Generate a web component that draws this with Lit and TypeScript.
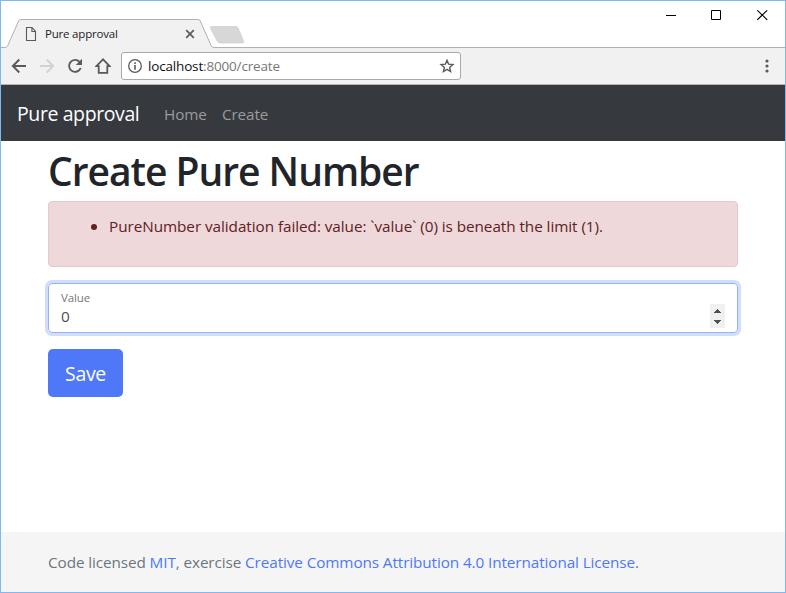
import { LitElement, html, css } from "lit";
import { customElement } from "lit/decorators.js";

@customElement("browser-chrome")
class BrowserChrome extends LitElement {
  static styles = css`
    :host { display: block; flex: none; }
    * { box-sizing: border-box; }
    svg { display: block; flex: none; }
    .titlebar { height: 47px; display: grid; grid-template-columns: 1fr auto; position: relative; }
    .shapes { position: absolute; left: 0; top: 0; }
    .tab { position: relative; display: flex; align-items: center; height: 28px; margin: 19px 0 0 24px; width: 171px; font-size: 11.5px; color: #222; }
    .tab span { margin-left: 8px; flex: 1; letter-spacing: -0.2px; }
    .controls { display: flex; padding: 8px 16px 0 0; gap: 34px; }
    .controls svg { width: 12px; }
    .toolbar { height: 37px; background: #f1f1f1; border-bottom: 1px solid #b6b4b6; display: flex; align-items: center; padding-left: 10px; }
    .nav { display: flex; gap: 12px; margin-right: 10px; }
    .address { width: 340px; height: 28px; border: 1px solid #a9a9a9; border-radius: 3px; background: #fff; display: flex; align-items: center; padding: 0 5px; font-size: 13.5px; letter-spacing: -0.17px; color: #777; }
    .address span { flex: 1; margin-left: 5px; }
    .address b { font-weight: 400; color: #111; }
    .menu { margin-left: auto; margin-right: 16px; }
  `;
  render() {
    return html`
      <div class="titlebar">
        <svg class="shapes" width="784" height="47" viewBox="1 1 784 47">
          <path d="M1 47.5H7L19.5 19.5H199.5L212 47.5H785V48H1Z" fill="#f1f1f1"/>
          <path d="M1 47.5H5Q7 47.5 7.8 45.5L18.6 21Q19.3 19.5 21 19.5H198Q199.6 19.5 200.3 21L211 45.5Q212 47.5 214 47.5H785" fill="none" stroke="#b2b0b2"/>
          <path d="M211.6 26.5H236Q237.5 26.5 238.2 28L243.7 41.5Q244 43 242.5 43H220Q218 43 217.2 41.2L210.5 28.2Q210 26.5 211.6 26.5Z" fill="#d7d7d7" stroke="#cdcdcd" stroke-width=".7"/>
        </svg>
        <div class="tab">
          <svg width="12" height="16" viewBox="0 0 12 16" fill="none" stroke="#5a5a5a" stroke-width="1.1"><path d="M1.5 1.5H7L10.5 5.2V14.5H1.5ZM6.9 1.6V5.5H10.5"/></svg>
          <span>Pure approval</span>
          <svg width="12" height="12" viewBox="0 0 12 12" stroke="#5a5a5a" stroke-width="1.7"><path d="M2.2 2.2L9.8 9.8M9.8 2.2L2.2 9.8"/></svg>
        </div>
        <div class="controls">
          <svg width="12" height="12" viewBox="0 0 12 12"><path d="M1 6H11V7H1Z" fill="#000"/></svg>
          <svg width="12" height="12" viewBox="0 0 12 12"><path d="M.5 1.5H9.5V10.5H.5Z" fill="none" stroke="#000"/></svg>
          <svg width="12" height="12" viewBox="0 0 12 12"><path d="M.3 1.3L10.2 10.8M10.2 1.3L.3 10.8" stroke="#000" stroke-width="1.15"/></svg>
        </div>
      </div>
      <div class="toolbar">
        <div class="nav">
          <svg width="16" height="16" viewBox="0 0 16 16" fill="none" stroke="#5a5a5a" stroke-width="1.9"><path d="M15 8H2.5M8.3 1.5L1.8 8L8.3 14.5"/></svg>
          <svg width="16" height="16" viewBox="0 0 16 16" fill="none" stroke="#d2d2d2" stroke-width="1.9"><path d="M1 8H13.5M7.7 1.5L14.2 8L7.7 14.5"/></svg>
          <svg width="16" height="16" viewBox="0 0 16 16"><path d="M12.6 3.9A6 6 0 1 0 13.7 10" fill="none" stroke="#5a5a5a" stroke-width="1.9"/><path d="M15 .8V7H8.8Z" fill="#5a5a5a"/></svg>
          <svg width="16" height="16" viewBox="0 0 16 16" fill="none" stroke="#5a5a5a" stroke-width="1.8"><path d="M8 1.4L1.4 8.1H3.7V14.9H12.3V8.1H14.6Z"/></svg>
        </div>
        <div class="address">
          <svg width="16" height="16" viewBox="0 0 16 16"><circle cx="8" cy="8" r="6.3" fill="none" stroke="#5a5a5a" stroke-width="1.3"/><path d="M7.2 4.3H8.8V6H7.2ZM7.2 7H8.8V11.7H7.2Z" fill="#5a5a5a"/></svg>
          <span><b>localhost</b>:8000/create</span>
          <svg width="16" height="16" viewBox="0 0 16 16"><path d="M8 2.3L9.6 6.2L13.9 6.6L10.6 9.4L11.6 13.6L8 11.4L4.4 13.6L5.4 9.4L2.1 6.6L6.4 6.2Z" fill="none" stroke="#5a5a5a" stroke-width="1.4"/></svg>
        </div>
        <svg class="menu" width="4" height="14" viewBox="0 0 4 14" fill="#5a5a5a"><circle cx="2" cy="2" r="1.6"/><circle cx="2" cy="7" r="1.6"/><circle cx="2" cy="12" r="1.6"/></svg>
      </div>`;
  }
}

@customElement("app-root")
class AppRoot extends LitElement {
  static styles = css`
    :host { display: flex; flex-direction: column; box-sizing: border-box; width: 786px; height: 593px; border: 1px solid #7eb8f5; background: #fff; font-family: "Open Sans", "Noto Sans", sans-serif; font-size: 15.3px; line-height: 24px; color: #212529; }
    * { box-sizing: border-box; }
    .navbar { flex: none; height: 56px; background: #36393e; display: flex; align-items: center; padding: 1px 0 0 16px; color: #9a9c9e; letter-spacing: -0.15px; }
    .brand { width: 147px; color: #fff; font-size: 19.5px; letter-spacing: -0.4px; }
    .home { width: 58px; }
    main { flex: 1; padding: 0 47px; }
    h1 { margin: 9px 0 9px; font-size: 39px; font-weight: 600; line-height: 42px; white-space: nowrap; letter-spacing: -1.02px; }
    .alert { height: 66px; border: 1px solid #e9c8cc; border-radius: 4px; background: #eed8da; color: #602024; padding: 12px 20px; }
    ul { margin: 0; padding: 0 0 0 40px; list-style: none; white-space: nowrap; letter-spacing: -0.06px; }
    li { display: flex; align-items: center; }
    li::before { content: ""; flex: none; width: 6px; height: 6px; border-radius: 50%; background: #602024; margin: 1px 12px 0 -18px; }
    .field { margin-top: 16px; height: 50px; border: 1px solid #8fb4f8; border-radius: 4px; box-shadow: 0 0 0 3px #d2dcfb; padding: 5px 12px 4px; display: grid; grid-template-columns: 1fr auto; color: #495057; }
    .label { font-size: 11.5px; line-height: 17px; color: #777; letter-spacing: -0.1px; }
    .value { line-height: 21px; }
    .spin { align-self: end; width: 15px; height: 24px; background: #f0f0f0; display: block; }
    .save { margin-top: 16px; width: 75px; height: 48px; border-radius: 5px; background: #4e78f8; color: #fff; font-size: 19.5px; letter-spacing: -0.3px; padding-top: 2px; display: flex; align-items: center; justify-content: center; }
    footer { flex: none; height: 60px; background: #f5f5f5; color: #6c757d; padding: 0 47px; line-height: 61px; white-space: nowrap; letter-spacing: -0.1px; }
    a { color: #4e78f8; }
  `;
  render() {
    return html`
      <browser-chrome></browser-chrome>
      <nav class="navbar"><span class="brand">Pure approval</span><span class="home">Home</span><span>Create</span></nav>
      <main>
        <h1>Create Pure Number</h1>
        <div class="alert"><ul><li>PureNumber validation failed: value: \`value\` (0) is beneath the limit (1).</li></ul></div>
        <div class="field">
          <div><div class="label">Value</div><div class="value">0</div></div>
          <svg class="spin" viewBox="0 0 15 24"><path d="M7 5H8V6H9V7H10V8H11V9H4V8H5V7H6V6H7ZM4 16H11V17H10V18H9V19H8V20H7V19H6V18H5V17H4Z" fill="#505050"/></svg>
        </div>
        <div class="save">Save</div>
      </main>
      <footer>Code licensed <a>MIT</a>, exercise <a>Creative Commons Attribution 4.0 International License</a>.</footer>`;
  }
}
